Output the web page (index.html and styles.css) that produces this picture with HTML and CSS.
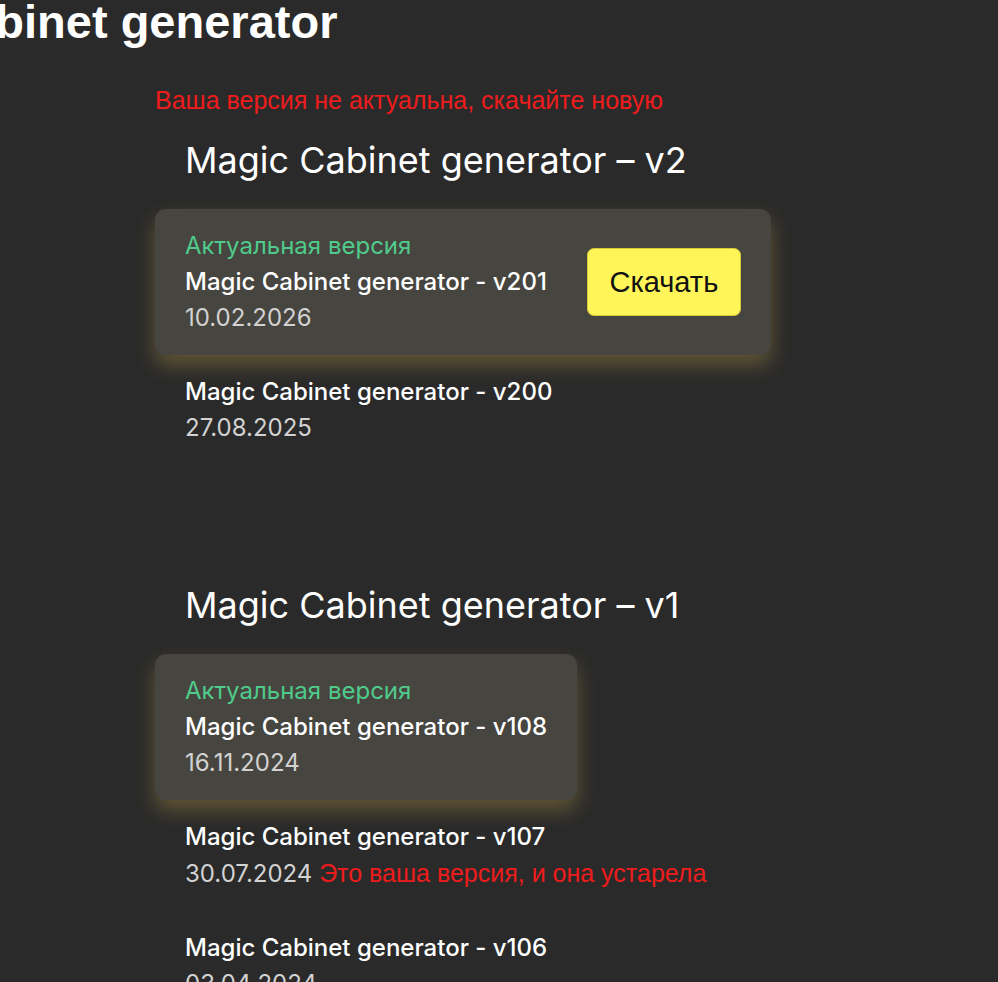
FILE: index.html
```html
<!DOCTYPE html>
<html lang="ru">
<head>
<meta charset="utf-8">
<title>Magic Cabinet generator</title>
<link rel="stylesheet" href="styles.css">
</head>
<body>
<main class="page">
  <h1 class="title">Magic Cabinet generator</h1>
  <p class="warning">Ваша версия не актуальна, скачайте новую</p>

  <section class="series">
    <h2 class="series-title">Magic Cabinet generator – v2</h2>
    <ul class="versions">
      <li class="version version--current">
        <div class="version-info">
          <div class="badge">Актуальная версия</div>
          <div class="name">Magic Cabinet generator - v201</div>
          <div class="date">10.02.2026</div>
        </div>
        <button class="download" type="button">Скачать</button>
      </li>
      <li class="version">
        <div class="version-info">
          <div class="name">Magic Cabinet generator - v200</div>
          <div class="date">27.08.2025</div>
        </div>
      </li>
    </ul>
  </section>

  <section class="series series--next">
    <h2 class="series-title">Magic Cabinet generator – v1</h2>
    <ul class="versions">
      <li class="version version--current">
        <div class="version-info">
          <div class="badge">Актуальная версия</div>
          <div class="name">Magic Cabinet generator - v108</div>
          <div class="date">16.11.2024</div>
        </div>
      </li>
      <li class="version">
        <div class="version-info">
          <div class="name">Magic Cabinet generator - v107</div>
          <div class="date">30.07.2024 <span class="outdated">Это ваша версия, и она устарела</span></div>
        </div>
      </li>
      <li class="version">
        <div class="version-info">
          <div class="name">Magic Cabinet generator - v106</div>
          <div class="date">03.04.2024</div>
        </div>
      </li>
    </ul>
  </section>
</main>
</body>
</html>
```
FILE: styles.css
```css
html, body {
  margin: 0;
  padding: 0;
  background: #2a2a2a;
  overflow: hidden;
}

body {
  height: 982px;
  font-family: Inter, "Noto Sans", sans-serif;
  color: #ffffff;
}

.page {
  display: flex;
  flex-direction: column;
  align-items: flex-start;
  padding-left: 155px;
}

.title {
  margin: -4px 0 0 -366px;
  font-family: "Liberation Sans", Arial, sans-serif;
  font-weight: 700;
  font-size: 47px;
  line-height: 52px;
  color: #ffffff;
  white-space: nowrap;
}

.warning {
  margin: 40px 0 0 0;
  font-family: "Liberation Sans", Arial, sans-serif;
  font-size: 25px;
  line-height: 24px;
  color: #ee1c1c;
}

.series {
  display: flex;
  flex-direction: column;
  align-items: flex-start;
}

.series--next {
  margin-top: 118px;
}

.series-title {
  margin: 26px 0 27px 0;
  padding-left: 30px;
  font-size: 36px;
  line-height: 44px;
  font-weight: 400;
  color: #ffffff;
}

.series--next .series-title {
  margin-top: 0;
}

.versions {
  list-style: none;
  margin: 0;
  padding: 0;
  display: flex;
  flex-direction: column;
  align-items: flex-start;
}

.version {
  display: flex;
  align-items: center;
  padding: 19px 30px;
  border-radius: 11px;
}

.version--current {
  background: #47453f;
  box-shadow: 0 10px 20px rgba(225, 185, 80, 0.3);
}

.version-info {
  display: flex;
  flex-direction: column;
  font-size: 24px;
  line-height: 36px;
}

.badge {
  color: #4fcb8b;
}

.name {
  font-weight: 500;
  color: #ffffff;
}

.date {
  color: #d2d2d2;
}

.outdated {
  font-family: "Liberation Sans", Arial, sans-serif;
  font-size: 25px;
  color: #ee1c1c;
}

.download {
  margin-left: 40px;
  width: 154px;
  height: 68px;
  border: 1px solid #d8c838;
  border-radius: 7px;
  background: #fff559;
  color: #111111;
  font-family: "Liberation Sans", Arial, sans-serif;
  font-size: 29px;
  cursor: pointer;
}
```
